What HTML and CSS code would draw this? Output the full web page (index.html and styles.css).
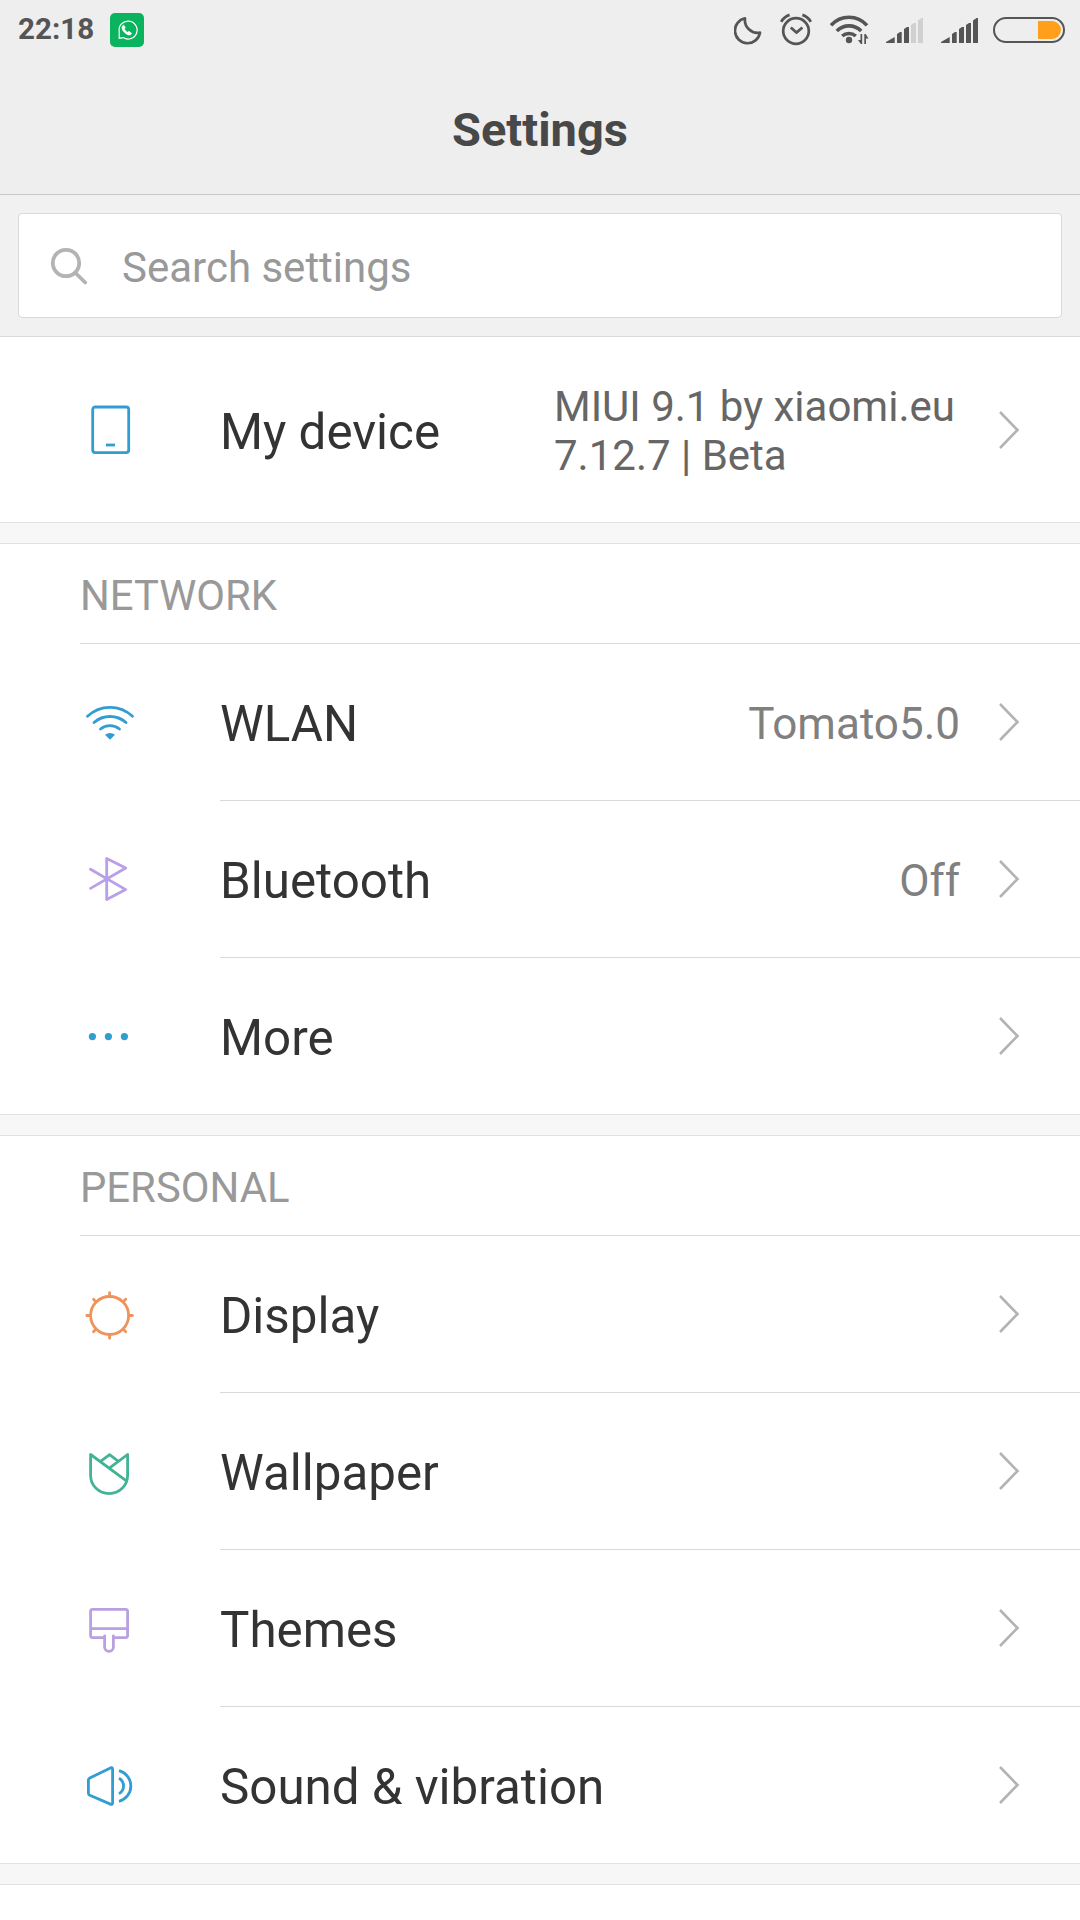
FILE: index.html
```html
<!DOCTYPE html>
<html lang="en">
    <head>
        <meta charset="utf-8">
        <title>Settings</title>
        <link rel="stylesheet" href="styles.css">
    </head>
    <body>
        <header class="header">
            <div class="statusbar">
                <span class="time">22:18</span>
                <svg class="whatsapp" width="34" height="34" viewBox="0 0 34 34">
                    <rect width="34" height="34" rx="5" fill="#0ab35d"/>
                    <path d="M9.2 25.2V18.5A9 9 0 1 1 13.2 24.6Z" fill="none" stroke="#fff" stroke-width="1.2"/>
                    <path d="M13.6 11.9C11 13.5 11.6 16.3 14.2 19.2C17.3 22.4 20.3 23 21.8 20.4L19 18.3L17.3 19.2C16 18.4 15 17.3 14.4 15.8L15.4 14.6Z" fill="#fff" stroke="#fff" stroke-width=".5"/>
                </svg>
                <div class="status-icons">
                    <svg width="28" height="60" viewBox="0 0 28 60">
                        <path class="line" d="M11 18.3A12.6 12.6 0 1 0 26 32.6A12.8 12.8 0 0 1 11 18.3Z"/>
                    </svg>
                    <svg class="alarm" width="32" height="60" viewBox="0 0 32 60">
                        <circle class="line" cx="16" cy="31" r="12.8"/>
                        <path class="line" d="M10.8 27.5L16.4 32.6L22.4 27.5M1.2 21.8Q4 16.8 9.6 14.9M22.4 14.9Q28 16.8 30.8 21.8"/>
                    </svg>
                    <svg class="wlan" width="39" height="60" viewBox="0 0 39 60">
                        <path class="line thick" d="M1 25.4A24 24 0 0 1 37 25.4M6.8 31A17 17 0 0 1 31.2 31M12.2 36A10.5 10.5 0 0 1 25.8 36"/>
                        <circle cx="19" cy="40" r="3.2"/>
                        <path d="M30.5 34H32.2V44H30.8L28 40H30.5ZM34.3 44V34H35.7L38.5 38.5H36V44Z"/>
                    </svg>
                    <svg class="signal" width="37" height="60" viewBox="0 0 37 60">
                        <path d="M0 43V42L8.7 37V43ZM11 43V34L14 32H15.7V43ZM18 43V29L21 27H23V43Z"/>
                        <path class="off" d="M25 43V25L28 23H30V43ZM32 43V20.5L35.5 18H37V43Z"/>
                    </svg>
                    <svg class="signal" width="37" height="60" viewBox="0 0 37 60">
                        <path d="M0 43V42L8.7 37V43ZM11 43V34L14 32H15.7V43ZM18 43V29L21 27H23V43ZM25 43V25L28 23H30V43ZM32 43V20.5L35.5 18H37V43Z"/>
                    </svg>
                    <svg class="battery" width="72" height="60" viewBox="0 0 72 60">
                        <rect class="line thin" x="1" y="18" width="70" height="24" rx="12"/>
                        <path class="charge" d="M45 21H59A9 9 0 0 1 59 39H45Z"/>
                    </svg>
                </div>
            </div>
            <h1 class="title">Settings</h1>
        </header>

        <div class="search">
            <div class="search-box">
                <svg width="38" height="38" viewBox="0 0 38 38">
                    <circle cx="16" cy="16" r="13.2"/>
                    <path d="M25.5 26L35.2 35.5"/>
                </svg>
                <span>Search settings</span>
            </div>
        </div>

        <main>
            <section class="group">
                <div class="row device">
                    <svg class="icon blue" viewBox="0 0 52 52">
                        <rect x="8.7" y="3" width="36" height="45.6" rx="2.5"/>
                        <path class="butt" d="M22 41H31"/>
                    </svg>
                    <div class="body">
                        <span class="label">My device</span>
                        <span class="value">MIUI 9.1 by xiaomi.eu<br>7.12.7 | Beta</span>
                        <svg class="arrow" viewBox="0 0 24 40"><path d="M3 2L20.5 20L3 38"/></svg>
                    </div>
                </div>
            </section>

            <section class="group">
                <h2 class="heading">NETWORK</h2>
                <div class="row">
                    <svg class="icon blue" viewBox="0 0 52 52">
                        <path d="M3.5 20.3A32.6 32.6 0 0 1 48.5 20.3M10 26.5A24.3 24.3 0 0 1 42 26.5M16.5 33A15 15 0 0 1 35.5 33"/>
                        <path class="solid" d="M21 38.8Q26 35.4 31 38.8L26 43.7Z"/>
                    </svg>
                    <div class="body">
                        <span class="label">WLAN</span>
                        <span class="value">Tomato5.0</span>
                        <svg class="arrow" viewBox="0 0 24 40"><path d="M3 2L20.5 20L3 38"/></svg>
                    </div>
                </div>
                <div class="row">
                    <svg class="icon bluetooth" viewBox="0 0 52 52">
                        <path d="M6.5 16.2L41.7 36.6L22.7 46.5V5.5L41.7 15L6.5 35.4"/>
                    </svg>
                    <div class="body">
                        <span class="label">Bluetooth</span>
                        <span class="value">Off</span>
                        <svg class="arrow" viewBox="0 0 24 40"><path d="M3 2L20.5 20L3 38"/></svg>
                    </div>
                </div>
                <div class="row">
                    <svg class="icon blue" viewBox="0 0 52 52">
                        <circle class="solid" cx="8.4" cy="26.6" r="3.6"/>
                        <circle class="solid" cx="24.4" cy="26.6" r="3.6"/>
                        <circle class="solid" cx="40.4" cy="26.6" r="3.6"/>
                    </svg>
                    <div class="body">
                        <span class="label">More</span>
                        <svg class="arrow" viewBox="0 0 24 40"><path d="M3 2L20.5 20L3 38"/></svg>
                    </div>
                </div>
            </section>

            <section class="group">
                <h2 class="heading">PERSONAL</h2>
                <div class="row">
                    <svg class="icon orange" viewBox="0 0 52 52">
                        <circle cx="25.6" cy="27.5" r="19"/>
                        <path d="M25.6 8V4.7M25.6 47V50.3M6 27.5H2.8M45.2 27.5H48.4M11.5 13.4L9.5 11.2M39.7 13.4L41.7 11.2M11.5 41.6L9.5 43.8M39.7 41.6L41.7 43.8"/>
                    </svg>
                    <div class="body">
                        <span class="label">Display</span>
                        <svg class="arrow" viewBox="0 0 24 40"><path d="M3 2L20.5 20L3 38"/></svg>
                    </div>
                </div>
                <div class="row">
                    <svg class="icon green" viewBox="0 0 52 52">
                        <path d="M41.7 35.3L6.6 9.5V30.5A18.5 18.2 0 0 0 43.6 30.5V9.5L26 22.7M16.6 16.3L25.6 9.7L34.4 16.3"/>
                    </svg>
                    <div class="body">
                        <span class="label">Wallpaper</span>
                        <svg class="arrow" viewBox="0 0 24 40"><path d="M3 2L20.5 20L3 38"/></svg>
                    </div>
                </div>
                <div class="row">
                    <svg class="icon purple" viewBox="0 0 52 52">
                        <path d="M20.6 34V35.6H8.6Q6.6 35.6 6.6 33.6V9.3Q6.6 7.3 8.6 7.3H41.6Q43.6 7.3 43.6 9.3V33.6Q43.6 35.6 41.6 35.6H29.4V34M6.6 26.6H43.6M20.6 35V45A4.4 4.4 0 0 0 29.4 45V35"/>
                    </svg>
                    <div class="body">
                        <span class="label">Themes</span>
                        <svg class="arrow" viewBox="0 0 24 40"><path d="M3 2L20.5 20L3 38"/></svg>
                    </div>
                </div>
                <div class="row">
                    <svg class="icon blue" viewBox="0 0 52 52">
                        <path d="M5.8 19L26.4 8.9Q28.6 8 28.6 10V44Q28.6 46 26.4 45.1L5.8 36.2Q4.4 35.5 4.4 34.2V21Q4.4 19.8 5.8 19Z"/>
                        <path class="butt" d="M35 11.7A15.8 15.8 0 0 1 35 42.3M35 19.3A8.8 8.8 0 0 1 35 34.7"/>
                    </svg>
                    <div class="body">
                        <span class="label">Sound &amp; vibration</span>
                        <svg class="arrow" viewBox="0 0 24 40"><path d="M3 2L20.5 20L3 38"/></svg>
                    </div>
                </div>
            </section>

            <section class="group"></section>
        </main>
    </body>
</html>
```

FILE: styles.css
```css
* {
    box-sizing: border-box;
}

body {
    margin: 0;
    height: 1920px;
    overflow: hidden;
    background: #f7f7f7;
    color: #333;
    font-family: Roboto, "Noto Sans", sans-serif;
    display: flex;
    flex-direction: column;
}

svg {
    display: block;
    flex: none;
}

/* status bar and title */
.header {
    height: 195px;
    background: #eee;
    border-bottom: 1px solid #c8c8c8;
}

.statusbar {
    display: flex;
    align-items: center;
    height: 60px;
    padding: 0 15px 0 18px;
}

.time {
    width: 92px;
    padding-bottom: 2px;
    font-size: 29.6px;
    font-weight: bold;
    color: #555;
}

.status-icons {
    display: flex;
    margin-left: auto;
    fill: #555;
}

.line {
    fill: none;
    stroke: #555;
    stroke-width: 2.7;
    stroke-linejoin: round;
}

.thick {
    stroke-width: 3.6;
}

.thin {
    stroke-width: 2;
}

.off {
    fill: #d0d0d0;
}

.charge {
    fill: #ff9f1c;
}

.alarm {
    margin-left: 18px;
}

.wlan {
    margin-left: 18px;
}

.signal {
    margin-left: 17px;
}

.signal + .signal {
    margin-left: 18px;
}

.battery {
    margin-left: 15px;
}

.title {
    margin: 0;
    padding-top: 39px;
    text-align: center;
    font-size: 47px;
    line-height: 62px;
    font-weight: bold;
    color: #484848;
}

/* search */
.search {
    height: 142px;
    padding: 18px;
    background: #f1f1f1;
    border-bottom: 1px solid #d9d9d9;
}

.search-box {
    display: flex;
    align-items: center;
    height: 105px;
    padding-left: 31px;
    background: #fff;
    border: 1px solid #d9d9d9;
    border-radius: 4px;
    font-size: 42px;
    color: #999;
}

.search-box svg {
    fill: none;
    stroke: #b3b3b3;
    stroke-width: 3.8;
    stroke-linecap: round;
}

.search-box span {
    padding: 4px 0 0 34px;
}

/* list */
main {
    flex: 1;
    display: flex;
    flex-direction: column;
    gap: 20px;
}

.group {
    background: #fff;
    border-top: 1px solid #e2e2e2;
    border-bottom: 1px solid #e2e2e2;
}

.group:first-child {
    border-top: none;
}

.group:last-child {
    flex: 1;
    border-bottom: none;
}

.heading {
    height: 100px;
    margin: 0 0 0 80px;
    padding-top: 3px;
    border-bottom: 1px solid #d9d9d9;
    font-size: 41.8px;
    font-weight: normal;
    line-height: 97px;
    color: #999;
}

.row {
    display: flex;
    align-items: center;
    height: 157px;
    padding-left: 84px;
}

.row:last-child {
    height: 156px;
}

.row.device {
    height: 185px;
}

.body {
    flex: 1;
    display: flex;
    align-items: center;
    height: 100%;
    margin-left: 84px;
    border-bottom: 1px solid #d9d9d9;
}

.row:last-child .body {
    border-bottom: none;
}

.label {
    padding-top: 4px;
    font-size: 49.3px;
}

.value {
    margin-left: auto;
    padding-top: 4px;
    font-size: 44px;
    color: #808080;
}

.device .value {
    width: 406px;
    padding-top: 2px;
    font-size: 42px;
    line-height: 49px;
    color: #666;
}

.arrow {
    width: 24px;
    height: 40px;
    margin: 0 59px 0 37px;
    fill: none;
    stroke: #b3b3b3;
    stroke-width: 2.6;
}

.label + .arrow {
    margin-left: auto;
}

.icon {
    width: 52px;
    height: 52px;
    margin-bottom: 2px;
    fill: none;
    stroke: currentColor;
    stroke-width: 2.8;
    stroke-linecap: round;
    stroke-linejoin: round;
}

.row:last-child .icon {
    margin-bottom: 0;
}

.butt {
    stroke-linecap: butt;
}

.solid {
    fill: currentColor;
    stroke: none;
}

.blue {
    color: #329dd2;
}

.bluetooth {
    color: #b89fe8;
}

.orange {
    color: #ef935d;
}

.green {
    color: #43b395;
}

.purple {
    color: #b9a0e0;
}
```
